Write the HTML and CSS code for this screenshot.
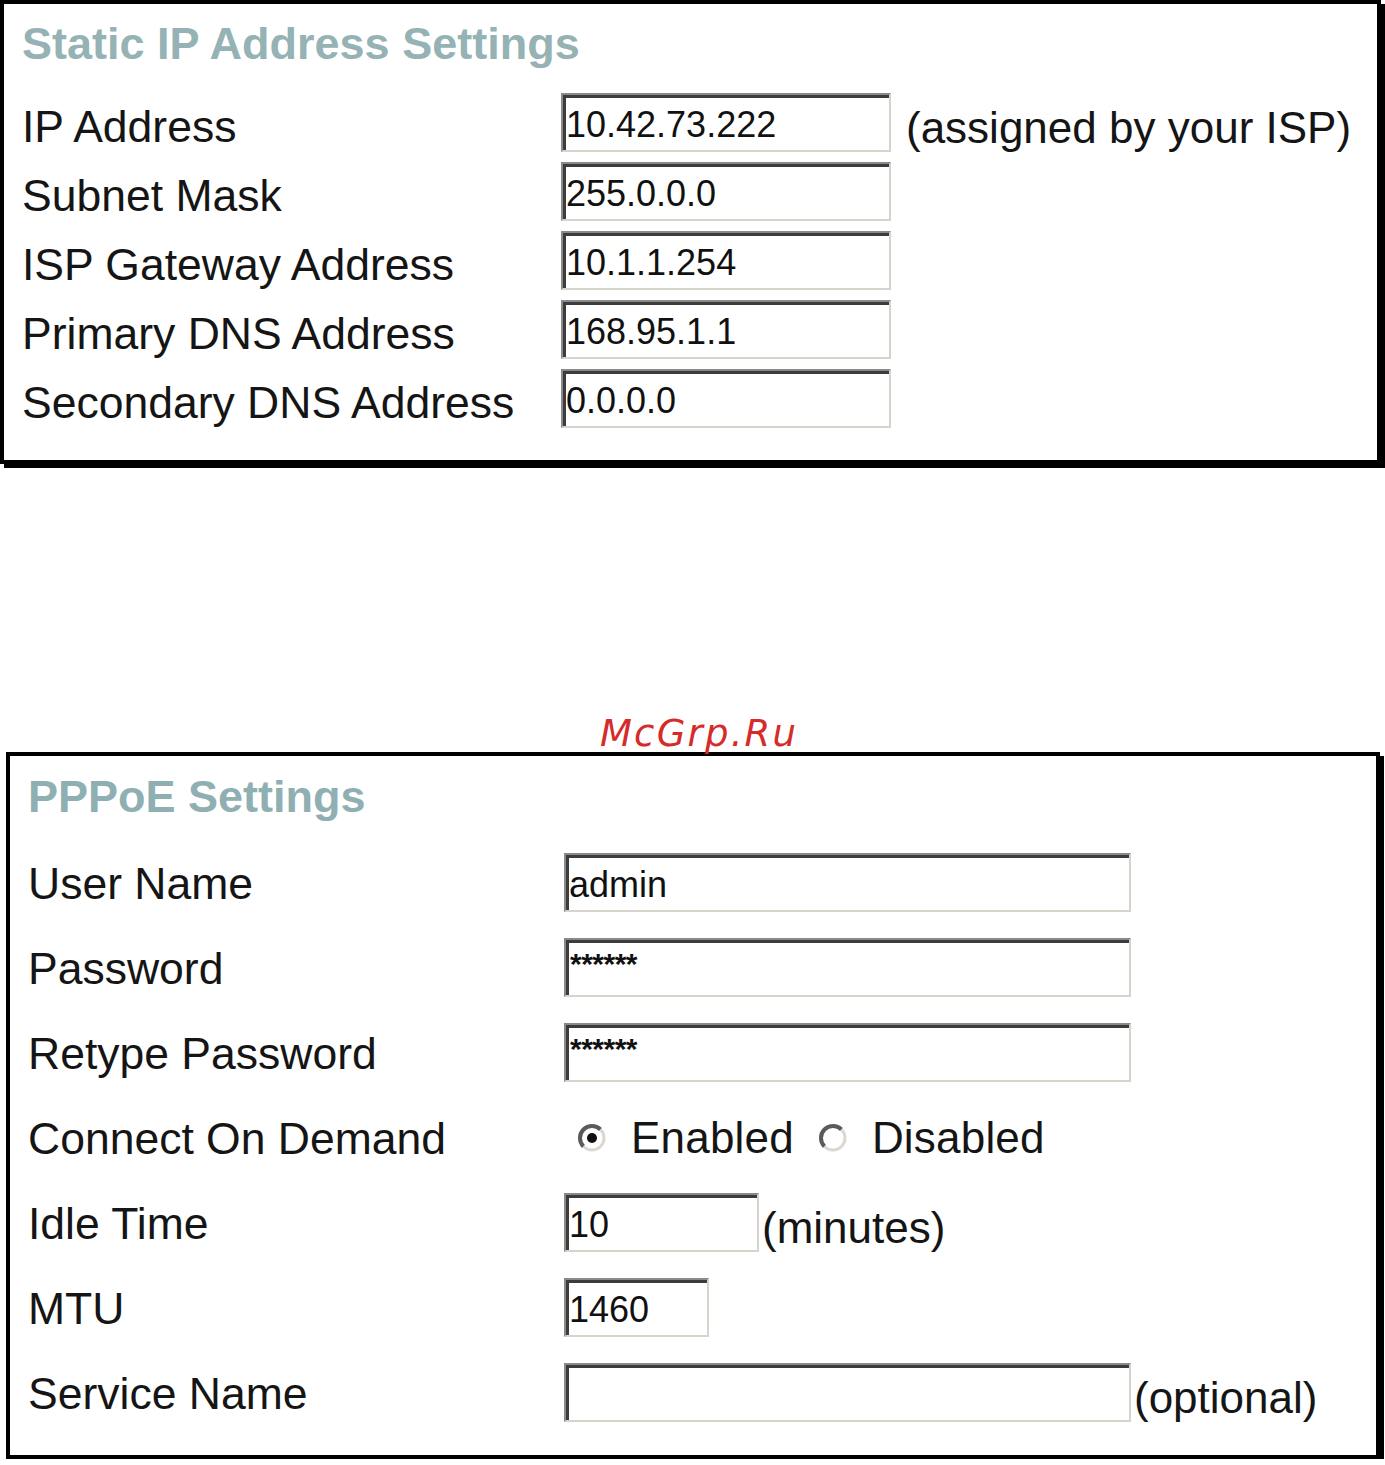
FILE: index.html
```html
<!DOCTYPE html>
<html>
<head>
    <link rel="stylesheet" href="styles.css">
</head>
<body>
    <div class="page">
        <div class="panel panel-static">
            <h2 class="panel-title">Static IP Address Settings</h2>
            <div class="form form-static">
                <div class="row">
                    <div class="label">IP Address</div>
                    <div class="field">10.42.73.222</div>
                    <span class="note note-wide">(assigned by your ISP)</span>
                </div>
                <div class="row">
                    <div class="label">Subnet Mask</div>
                    <div class="field">255.0.0.0</div>
                </div>
                <div class="row">
                    <div class="label">ISP Gateway Address</div>
                    <div class="field">10.1.1.254</div>
                </div>
                <div class="row">
                    <div class="label">Primary DNS Address</div>
                    <div class="field">168.95.1.1</div>
                </div>
                <div class="row">
                    <div class="label">Secondary DNS Address</div>
                    <div class="field">0.0.0.0</div>
                </div>
            </div>
        </div>

        <div class="watermark">McGrp.Ru</div>

        <div class="panel panel-pppoe">
            <h2 class="panel-title">PPPoE Settings</h2>
            <div class="form form-pppoe">
                <div class="row">
                    <div class="label">User Name</div>
                    <div class="field field-long">admin</div>
                </div>
                <div class="row">
                    <div class="label">Password</div>
                    <div class="field field-long field-secret"><span>******</span></div>
                </div>
                <div class="row">
                    <div class="label">Retype Password</div>
                    <div class="field field-long field-secret"><span>******</span></div>
                </div>
                <div class="row">
                    <div class="label">Connect On Demand</div>
                    <div class="radios">
                        <svg class="radio" width="30" height="30" viewBox="0 0 30 30">
                            <circle cx="15" cy="15" r="11" fill="#fff"/>
                            <path d="M6.5 23.5 A12 12 0 0 1 23.5 6.5" fill="none" stroke="#5a5a5a" stroke-width="4"/>
                            <path d="M23.5 6.5 A12 12 0 0 1 6.5 23.5" fill="none" stroke="#dcd8d0" stroke-width="3"/>
                            <circle cx="15" cy="15" r="5" fill="#111"/>
                        </svg>
                        <span class="radio-text">Enabled</span>
                        <svg class="radio" width="30" height="30" viewBox="0 0 30 30">
                            <circle cx="15" cy="15" r="11" fill="#fff"/>
                            <path d="M6.5 23.5 A12 12 0 0 1 23.5 6.5" fill="none" stroke="#5a5a5a" stroke-width="4"/>
                            <path d="M23.5 6.5 A12 12 0 0 1 6.5 23.5" fill="none" stroke="#dcd8d0" stroke-width="3"/>
                        </svg>
                        <span class="radio-text">Disabled</span>
                    </div>
                </div>
                <div class="row">
                    <div class="label">Idle Time</div>
                    <div class="field field-idle">10</div>
                    <span class="note">(minutes)</span>
                </div>
                <div class="row">
                    <div class="label">MTU</div>
                    <div class="field field-mtu">1460</div>
                </div>
                <div class="row">
                    <div class="label">Service Name</div>
                    <div class="field field-long"></div>
                    <span class="note">(optional)</span>
                </div>
            </div>
        </div>
    </div>
</body>
</html>
```

FILE: styles.css
```css
body {
    margin: 0;
    background: #fff;
    font-family: "Liberation Sans", Arial, sans-serif;
    color: #151515;
}

.page {
    position: relative;
    width: 1385px;
}

.panel {
    box-sizing: border-box;
    border: 4px solid #000;
    box-shadow: 4px 4px 0 #000;
    background: #fff;
}

.panel-static {
    width: 1381px;
    padding: 15px 0 32px 18px;
}

.panel-pppoe {
    width: 1374px;
    margin: 288px 0 0 6px;
    padding: 16px 0 33px 18px;
}

.panel-title {
    margin: 0 0 24px 0;
    font-size: 45px;
    line-height: 50px;
    font-weight: bold;
    color: #95b2b4;
}

.panel-pppoe .panel-title {
    margin-bottom: 31px;
    color: #8fb0b3;
}

.form {
    display: flex;
    flex-direction: column;
}

.form-static {
    gap: 10px;
}

.form-pppoe {
    gap: 26px;
}

.row {
    display: flex;
    align-items: center;
    height: 59px;
}

.label {
    flex: none;
    font-size: 44.5px;
    line-height: 52px;
    white-space: nowrap;
}

.form-static .label {
    width: 539px;
    margin-top: 8px;
}

.form-pppoe .label {
    width: 536px;
    margin-top: 2px;
}

.field {
    box-sizing: border-box;
    flex: none;
    width: 330px;
    height: 59px;
    display: flex;
    align-items: center;
    padding: 4px 0 0 3px;
    border-style: solid;
    border-width: 2px;
    border-color: #8a8a8a #d8d4cc #d8d4cc #8a8a8a;
    box-shadow: inset 3px 3px 0 #3c3c3c;
    background: #fff;
    font-size: 36px;
    color: #111;
}

.field-long {
    width: 567px;
}

.field-idle {
    width: 195px;
}

.field-mtu {
    width: 145px;
}

.field-secret {
    align-items: flex-start;
    padding-top: 0;
}

.field-secret span {
    padding: 9px 0 0 1px;
    font-size: 30px;
    line-height: 30px;
    font-weight: bold;
    letter-spacing: -0.5px;
}

.note {
    margin: 10px 0 0 3px;
    font-size: 44px;
    white-space: nowrap;
}

.note-wide {
    margin-left: 15px;
}

.radios {
    display: flex;
    align-items: center;
    padding-left: 13px;
}

.radio {
    flex: none;
}

.radio-text {
    margin: 0 24px 0 24px;
    font-size: 44px;
    letter-spacing: 0.2px;
}

.watermark {
    position: absolute;
    left: 600px;
    top: 715px;
    font-family: "DejaVu Sans", sans-serif;
    font-style: italic;
    font-size: 37px;
    line-height: 37px;
    letter-spacing: 2.2px;
    color: #d62b2b;
}
```
